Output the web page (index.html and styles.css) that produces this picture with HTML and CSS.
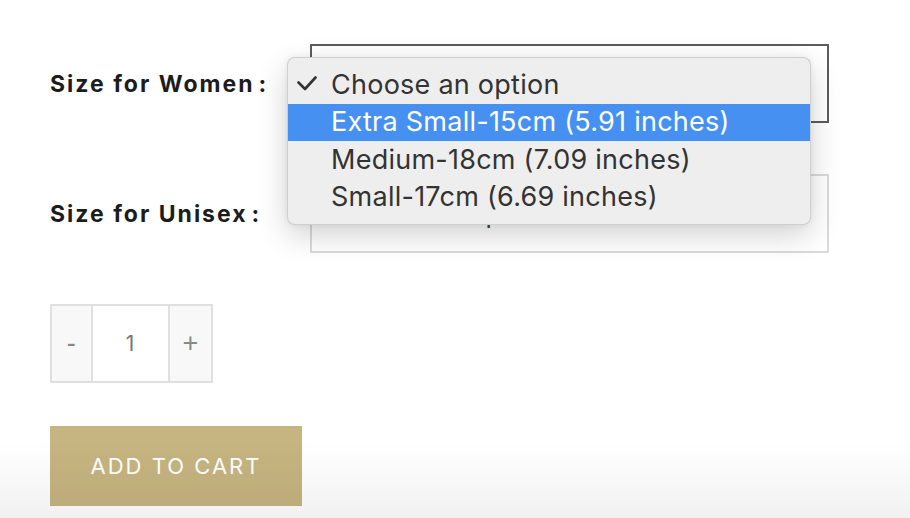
FILE: index.html
```html
<!DOCTYPE html>
<html>
<head>
<meta charset="utf-8">
<link rel="stylesheet" href="styles.css">
</head>
<body>
<div class="form">
  <div class="row">
    <label class="label">Size for Women<span class="colon">:</span></label>
    <div class="select select-focus"><span class="value">Choose an option</span></div>
  </div>
  <div class="row row-second">
    <label class="label">Size for Unisex<span class="colon">:</span></label>
    <div class="select"><span class="value">Choose an option</span></div>
  </div>

  <div class="popup">
    <div class="opt opt-checked">
      <svg class="check" width="20" height="16" viewBox="0 0 20 16"><path d="M1.5 6.5 L8 13 L18.5 1.5" fill="none" stroke="#333" stroke-width="2.6" stroke-linecap="round" stroke-linejoin="round"/></svg>
      <span>Choose an option</span>
    </div>
    <div class="opt opt-active"><span>Extra Small-15cm (5.91 inches)</span></div>
    <div class="opt"><span>Medium-18cm (7.09 inches)</span></div>
    <div class="opt"><span>Small-17cm (6.69 inches)</span></div>
  </div>

  <div class="qty">
    <div class="qty-btn">-</div>
    <div class="qty-input">1</div>
    <div class="qty-btn">+</div>
  </div>

  <div class="cart">ADD TO CART</div>
</div>
<div class="fade"></div>
</body>
</html>
```
FILE: styles.css
```css
html, body {
  margin: 0;
  padding: 0;
  background: #ffffff;
  width: 910px;
  height: 518px;
  overflow: hidden;
}
.form {
  position: relative;
  padding: 44px 0 0 50px;
  font-family: "Inter", "Liberation Sans", sans-serif;
}
.row {
  display: flex;
  align-items: center;
  height: 79px;
}
.row-second {
  margin-top: 51px;
}
.label {
  width: 260px;
  font-weight: 700;
  font-size: 23px;
  letter-spacing: 2px;
  color: #1c1c1c;
}
.colon {
  margin-left: 4px;
}
.select {
  box-sizing: border-box;
  width: 519px;
  height: 79px;
  border: 2px solid #dadada;
  display: flex;
  align-items: center;
  padding-left: 19px;
}
.select-focus {
  border-color: #5c5c5c;
}
.value {
  font-size: 26px;
  color: #444;
}
.popup {
  position: absolute;
  left: 287px;
  top: 57px;
  width: 524px;
  height: 168px;
  box-sizing: border-box;
  padding-top: 8px;
  background: #eeeeee;
  border: 1px solid rgba(0, 0, 0, 0.13);
  border-radius: 8px;
  box-shadow: 0 10px 30px rgba(0, 0, 0, 0.18), 0 0 6px rgba(0, 0, 0, 0.06);
}
.opt {
  position: relative;
  height: 37.5px;
  display: flex;
  align-items: center;
  padding-left: 43px;
  font-size: 27px;
  letter-spacing: 0.25px;
  color: #333;
  line-height: 1;
}
.opt span {
  margin-top: -1px;
}
.opt-active {
  background: #4690f2;
  color: #ffffff;
}
.check {
  position: absolute;
  left: 9px;
  top: 10px;
}
.qty {
  display: flex;
  margin-top: 51px;
  width: 163px;
  height: 79px;
  box-sizing: border-box;
  border: 2px solid #e0e0e0;
}
.qty-btn {
  width: 39px;
  background: #f8f8f8;
  display: flex;
  align-items: center;
  justify-content: center;
  font-family: "Liberation Sans", sans-serif;
  font-size: 27px;
  color: #888;
}
.qty-btn:last-child {
  width: 42px;
}
.qty-input {
  width: 76px;
  border-left: 2px solid #e0e0e0;
  border-right: 2px solid #e0e0e0;
  background: #ffffff;
  display: flex;
  align-items: center;
  justify-content: center;
  font-size: 21px;
  color: #777;
}
.cart {
  margin-top: 43px;
  width: 252px;
  height: 80px;
  background: #c6b580;
  color: #ffffff;
  display: flex;
  align-items: center;
  justify-content: center;
  font-size: 22px;
  letter-spacing: 2px;
  font-weight: 400;
}
.fade {
  position: fixed;
  left: 0;
  right: 0;
  bottom: 0;
  height: 75px;
  background: linear-gradient(to bottom, rgba(0, 0, 0, 0), rgba(0, 0, 0, 0.055));
  pointer-events: none;
}
```
